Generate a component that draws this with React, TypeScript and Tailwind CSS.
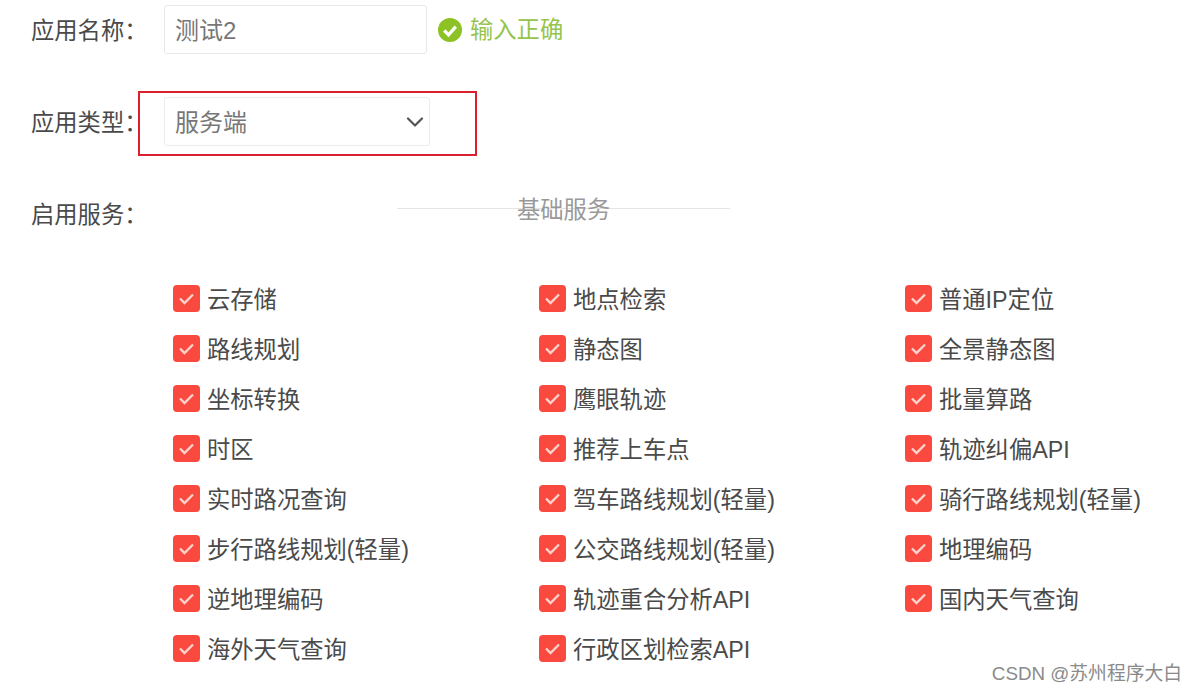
import { ChevronDown } from "lucide-react";

const services = [
  "云存储", "地点检索", "普通IP定位",
  "路线规划", "静态图", "全景静态图",
  "坐标转换", "鹰眼轨迹", "批量算路",
  "时区", "推荐上车点", "轨迹纠偏API",
  "实时路况查询", "驾车路线规划(轻量)", "骑行路线规划(轻量)",
  "步行路线规划(轻量)", "公交路线规划(轻量)", "地理编码",
  "逆地理编码", "轨迹重合分析API", "国内天气查询",
  "海外天气查询", "行政区划检索API",
];

function ServiceItem({ name }: { name: string }) {
  return (
    <div className="flex h-[50px] items-center gap-[7px]">
      <span className="mb-[2px] flex h-[27px] w-[27px] items-center justify-center rounded-[4px] bg-[#fa4a40]">
        <svg className="h-[27px] w-[27px]" viewBox="0 0 27 27">
          <path d="M7 13.5l4.5 4.5 8.5-8.5" fill="none" stroke="#fcd3cd" strokeWidth="2.4" />
        </svg>
      </span>
      <span className="whitespace-nowrap pt-[2px] text-[#4a4a4a]">{name}</span>
    </div>
  );
}

export default function App() {
  return (
    <div className="relative h-[692px] w-[1195px] overflow-hidden bg-white pl-[31px] pt-[5px] text-[23.3px] font-['Liberation_Sans','Noto_Sans_CJK_SC',sans-serif] text-[#555]">
      <div className="flex h-[49px] items-center">
        <label className="w-[133px] pt-[3px] text-[#4a4a4a]">应用名称：</label>
        <div className="flex h-full w-[263px] items-center rounded-[3px] border border-[#e8e8e8] px-[10px] pt-[3px] text-[24px] text-[#777]">测试2</div>
        <svg className="ml-[11px] h-[24px] w-[24px]" viewBox="0 0 25 25">
          <circle cx="12.5" cy="12.5" r="12.5" fill="#8cc224" />
          <path d="M6.5 13l4.5 4.5 7.5-8.5" fill="none" stroke="#fff" strokeWidth="3.4" />
        </svg>
        <span className="ml-[8px] pt-[2px] text-[#96c44c]">输入正确</span>
      </div>

      <div className="mt-[43px] flex h-[49px] items-center">
        <label className="w-[133px] pt-[3px] text-[#4a4a4a]">应用类型：</label>
        <div className="flex h-full w-[266px] items-center justify-between rounded-[3px] border border-[#ececec] pl-[10px] text-[24px] text-[#777]">
          <span className="pt-[3px]">服务端</span>
          <ChevronDown className="h-[28px] w-[28px] text-[#555]" strokeWidth={1.9} />
        </div>
      </div>

      {/* red annotation */}
      <div className="absolute left-[138px] top-[91px] h-[65px] w-[339px] border-2 border-[#d9202c]" />

      <div className="mt-[43px] flex h-[49px] items-center">
        <label className="w-[366px] pt-[3px] text-[#4a4a4a]">启用服务：</label>
        <div className="relative -mt-[11px] h-px w-[333px] bg-[#e4e4e4]">
          <span className="absolute left-[120px] top-[-11px] leading-[26px] text-[#999]">基础服务</span>
        </div>
      </div>

      <div className="ml-[142px] mt-[36px] grid grid-cols-[366px_366px_280px]">
        {services.map((s) => (
          <ServiceItem key={s} name={s} />
        ))}
      </div>

      <div className="absolute right-[13px] top-[660px] text-[18.8px] text-[#8a8a8a]">CSDN @苏州程序大白</div>
    </div>
  );
}
